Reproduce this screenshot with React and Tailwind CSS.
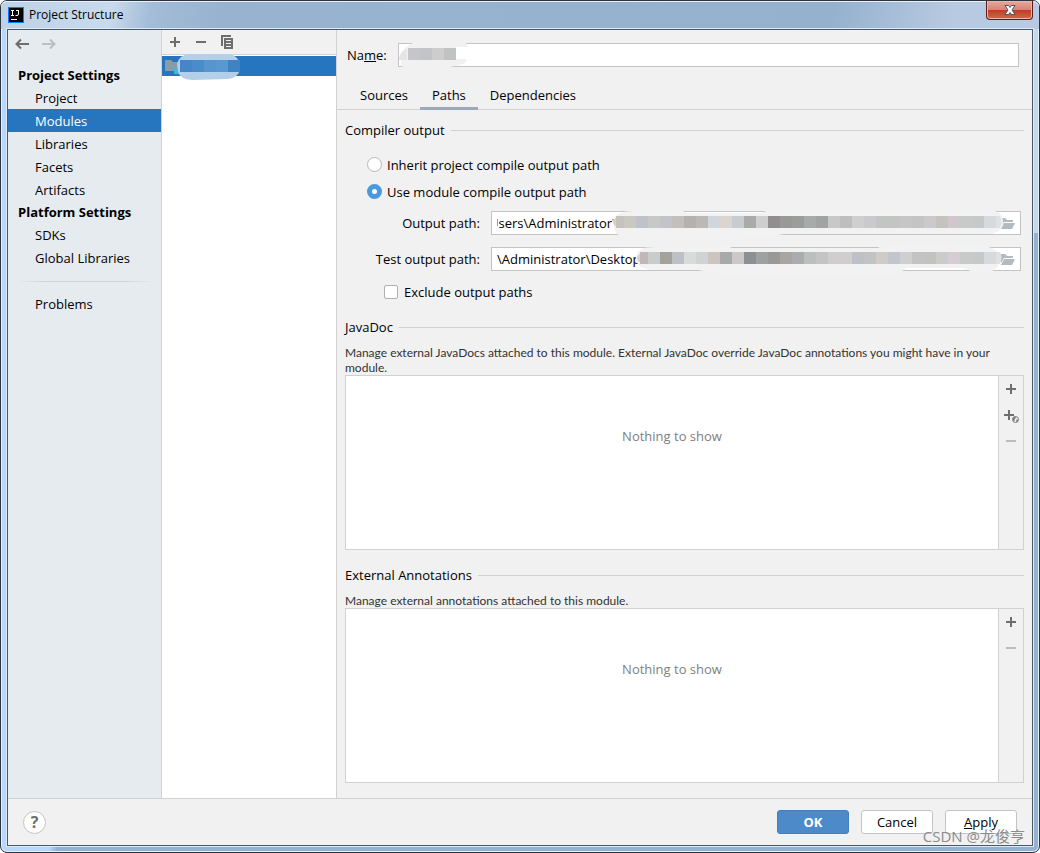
import { useState } from 'react'
import clsx from 'clsx'

const projectItems = ['Project', 'Modules', 'Libraries', 'Facets', 'Artifacts']
const platformItems = ['SDKs', 'Global Libraries']
const tabs = ['Sources', 'Paths', 'Dependencies']

const nameMask = ['#c5c6c9', '#c3c4c8', '#cfcccc', '#c1c2c4']
const moduleMask = ['#4586ca', '#4a8bcb', '#5894cf', '#5a98d2', '#4083c5']
const outputMask = [
  '#c5c2c0', '#cbc7c1', '#bfc3c9', '#c8c8ca', '#c3c4c9', '#c3bfbd', '#b5b1ae', '#bab9b7',
  '#d0d6dc', '#dad5d0', '#c8cccf', '#aaaaa8', '#cecece', '#918e8f', '#999999', '#9b9d9b',
  '#a9abaa', '#a1a4a2', '#c8c8c8', '#bebebe', '#cfcfcf', '#cacacc', '#c4c4c4', '#c3c5c3',
  '#c6c6c6', '#c4c4c4', '#cacacd', '#c4c3c0', '#cfc7cc', '#c8caca', '#c7c8c8', '#d7d9dd',
]
const testMask = [
  '#c2b6b9', '#c8cccb', '#a3a29d', '#bdc1c5', '#d9dbda', '#d0d3d1', '#cbc4bf', '#a7aaab',
  '#cdc8c8', '#8c9093', '#9fa1a0', '#999998', '#a9a6a1', '#aaacae', '#bcbfbd', '#c4c4c4',
  '#cecece', '#cfcdce', '#bfc0c6', '#c2c4c3', '#cfccc7', '#c2c5cc', '#cfcfcf', '#c3c3c3',
  '#c3c2c1', '#c9cccb', '#d6cdd2', '#c8caca', '#c7c8c8', '#d7d9dd',
]

const outputBand =
  'M132 4Q140 2 190 2L194 5H270L276 2H498Q511 3 511 14Q511 24 498 26H292Q270 31 200 31H134Q121 27 121 14Q121 7 132 4Z'
const testBand =
  'M152 4Q160 2 235 2L240 4H386L390 2H490Q508 4 508 14Q508 24 498 28H482L470 24H415L405 30H230L206 26H160Q144 24 144 14Q144 7 152 4Z'

function PlusIcon() {
  return (
    <svg width="16" height="16" viewBox="0 0 16 16" fill="#6e6e6e" aria-hidden="true">
      <path d="M7 3h2v4h4v2H9v4H7V9H3V7h4z" />
    </svg>
  )
}

function MinusIcon({ disabled }) {
  return (
    <svg width="16" height="16" viewBox="0 0 16 16" fill={disabled ? '#bdbdbd' : '#6e6e6e'} aria-hidden="true">
      <path d="M3 7h10v2H3z" />
    </svg>
  )
}

function CopyIcon() {
  return (
    <svg width="16" height="16" viewBox="0 0 16 16" fill="#6e6e6e" aria-hidden="true">
      <path d="M2 1h10v2H4v9H2z" />
      <path fillRule="evenodd" d="M5 4h9v11H5zM7 6v1h5V6zM7 9v1h5V9zM7 12v1h5v-1z" />
    </svg>
  )
}

function PlusGlobeIcon() {
  return (
    <svg className="overflow-visible" width="16" height="16" viewBox="0 0 16 16" aria-hidden="true">
      <path fill="#6e6e6e" d="M5 3h2v4h4v2H7v4H5V9H1V7h4z" />
      <circle cx="12.500" cy="12.500" r="3" fill="#f1f1f1" stroke="#7b7b7b" />
      <path fill="#7b7b7b" d="M10 10.500l2.500-1 .5 1.500-1.500 1 .5 1.500-1 .5-1.500-1.500zM13.500 12.500h2l-1 2-1.500.5z" />
    </svg>
  )
}

function ArrowIcon({ forward }) {
  return (
    <svg width="16" height="16" viewBox="0 0 16 16" fill="none" stroke={forward ? '#bcbfc1' : '#6e6e6e'} strokeWidth="2" aria-hidden="true">
      <path d={forward ? 'M1 8h12M9 3.500L13.500 8 9 12.500' : 'M15 8H3M7 3.500L2.500 8 7 12.500'} />
    </svg>
  )
}

function FolderOpenIcon() {
  return (
    <svg width="16" height="16" viewBox="0 0 16 16" fill="#b3bac0" aria-hidden="true">
      <path d="M1 3h4l2 2h6v2H4l-3 5z" />
      <path d="M4 8h11l-3 6H1z" />
    </svg>
  )
}

// Soft band with a row of 12px blocks that hides a path
function Mask({ start, colors, band }) {
  return (
    <svg
      className="pointer-events-none absolute -top-1 left-0 h-8 w-[530px]"
      viewBox="0 0 530 32"
      aria-hidden="true"
    >
      <path fill="#f2f2f2" d={band} />
      <path fill="#d3d1d0" d={`M${start + 12} 8Q${start + 2} 8 ${start + 1} 14Q${start + 2} 20 ${start + 12} 20z`} />
      {colors.map((color, i) => (
        <rect
          key={i}
          x={start + i * 12 + (i === 0 ? 4 : 0)}
          y="8"
          width={i === 0 ? 8 : 12}
          height="12"
          fill={color}
        />
      ))}
      <path fill="#dfe2e4" d="M504 8h4q3 6 0 12h-4z" />
    </svg>
  )
}

function PathField({ id, value, indent, start, colors, band }) {
  return (
    <div className="relative flex h-6 items-center border border-[#c4c4c4] bg-white pr-1 pl-[5px]">
      <input
        id={id}
        type="text"
        defaultValue={value}
        className={clsx('h-5 min-w-0 flex-1 bg-transparent outline-none', indent)}
      />
      <button type="button" aria-label="Browse">
        <FolderOpenIcon />
      </button>
      <Mask start={start} colors={colors} band={band} />
    </div>
  )
}

function SectionTitle({ children }) {
  return (
    <div className="flex h-5 items-center gap-[6px]">
      <h2>{children}</h2>
      <div className="h-px flex-1 bg-[#d1d1d1]" />
    </div>
  )
}

function EmptyList({ children }) {
  return (
    <div className="flex min-h-[175px] flex-1 border border-[#d1d1d1]">
      <div className="flex flex-1 justify-center bg-white pt-[49px] text-[#808080]">Nothing to show</div>
      <div className="flex w-[25px] flex-col items-center gap-[10px] border-l border-[#d1d1d1] pt-[5px]">
        {children}
      </div>
    </div>
  )
}

function NavGroup({ title, items, active, onSelect }) {
  return (
    <div>
      <h2 className="h-[22px] pl-[10px] font-bold">{title}</h2>
      {items.map((item) => (
        <button
          key={item}
          type="button"
          onClick={() => onSelect(item)}
          className={clsx(
            'block h-[23px] w-full pl-[27px] text-left',
            active === item && 'bg-[#2675bf] text-white'
          )}
        >
          {item}
        </button>
      ))}
    </div>
  )
}

export default function App() {
  const [section, setSection] = useState('Modules')
  const [tab, setTab] = useState('Paths')

  return (
    <div className="flex min-h-screen flex-col rounded-[7px] border border-[#2b3440] bg-[#94b1d0] bg-[linear-gradient(180deg,#c6d8ec_232px,transparent_232px),linear-gradient(90deg,#b9d6fb_48px,#94b1d0_56px)] bg-[length:6px_100%,100%_100%] bg-[position:100%_0,0_0] bg-no-repeat font-['Open_Sans','Noto_Sans_CJK_SC',sans-serif] text-[13px] leading-[22px] text-black shadow-[inset_0_0_0_1px_#e6f1fc]">
      {/* Title bar */}
      <header className="flex h-7 items-start rounded-t-[6px] bg-[linear-gradient(100deg,#bed1e6,#c8daed_110px,#a3bcd7_150px,#97b3d0_220px,#94b1ce_820px,#b8cae1_940px,#b8cae1)] pr-[6px] pl-[7px] shadow-[inset_0_1px_0_#e6f1fc]">
        <svg className="mt-[6px]" width="16" height="16" viewBox="0 0 16 16" fill="none" aria-hidden="true">
          <path fill="#087cfa" d="M0 0h16v16H0z" />
          <path fill="#000" d="M1 1h14v14H1z" />
          <path stroke="#fff" d="M3 3.500h3M4.500 3.500v5M3 8.500h3M8 3.500h3M10.500 3v4q0 1.500-1.500 1.500H7.500M3 12.500h6" />
        </svg>
        <h1 className="mt-[3px] ml-[5px] flex-1 text-xs leading-[22px]">Project Structure</h1>
        <button
          type="button"
          aria-label="Close"
          className="flex h-[19px] w-[47px] items-center justify-center rounded-b-[4px] border border-t-0 border-[#5a1f22] bg-[linear-gradient(#e8a99d,#d98374_48%,#c03a22_50%,#cf6a50)] shadow-[inset_0_0_0_1px_#ecb5aa]"
        >
          <svg width="12" height="10" viewBox="0 0 12 10" aria-hidden="true">
            <path
              fill="#fff"
              stroke="#4d5566"
              d="M1 .5h3.500L6 2.500 7.500.5H11L8 5l3 4.500H7.500L6 7.500 4.500 9.500H1L4 5z"
            />
          </svg>
        </button>
      </header>

      <div className="mx-[6px] mb-[6px] flex flex-1 flex-col border border-[#4b5965] bg-[#f1f1f1] shadow-[0_0_0_1px_#dbe9f8]">
        <div className="flex flex-1">
          {/* Settings navigation */}
          <nav className="w-[154px] shrink-0 border-r border-[#d1d1d1] bg-[#e6ebef]">
            <div className="flex h-[34px] gap-[11px] pt-[6px] pl-[6px]">
              <button type="button" aria-label="Back" className="h-4">
                <ArrowIcon />
              </button>
              <button type="button" aria-label="Forward" className="h-4" disabled>
                <ArrowIcon forward />
              </button>
            </div>
            <NavGroup title="Project Settings" items={projectItems} active={section} onSelect={setSection} />
            <NavGroup title="Platform Settings" items={platformItems} active={section} onSelect={setSection} />
            <div className="mx-2 mt-3 mb-[10px] h-px bg-[linear-gradient(90deg,transparent,#cfd3d6_20%,#cfd3d6_80%,transparent)]" />
            <button type="button" className="block h-[23px] w-full pl-[27px] text-left">
              Problems
            </button>
          </nav>

          {/* Module list */}
          <section className="flex w-[175px] shrink-0 flex-col border-r border-[#d1d1d1]">
            <div className="flex h-[25px] items-center gap-[10px] border-b border-[#d1d1d1] pl-[5px]">
              <button type="button" aria-label="Add">
                <PlusIcon />
              </button>
              <button type="button" aria-label="Remove">
                <MinusIcon />
              </button>
              <button type="button" aria-label="Copy">
                <CopyIcon />
              </button>
            </div>
            <div className="flex-1 bg-white pt-px">
              <button type="button" aria-label="Module" className="relative block h-5 w-full bg-[#2675bf]">
                <svg className="absolute -top-[2px] left-0" width="84" height="28" viewBox="0 0 84 28" aria-hidden="true">
                  <path fill="#8a9ba8" d="M3 6h6l2 2h6v9H3z" />
                  <path fill="#40b6e0" d="M12 14h6v6h-6z" />
                  <path fill="#b3cfea" d="M27 0h40q11 2 11 13 0 10-12 12l-36 1q-12-1-14-8l-1-8q2-9 12-10z" />
                  {moduleMask.map((color, i) => (
                    <rect key={i} x={18 + i * 12} y="6" width="12" height="12" fill={color} />
                  ))}
                </svg>
              </button>
            </div>
          </section>

          {/* Module editor */}
          <main className="flex min-w-0 flex-1 flex-col">
            <div className="flex items-center gap-3 pt-[13px] pr-[13px] pl-[10px]">
              <label htmlFor="module-name" className="w-[39px] shrink-0 whitespace-nowrap">
                Na<span className="underline">m</span>e:
              </label>
              <div className="relative h-6 flex-1">
                <input
                  id="module-name"
                  type="text"
                  className="block h-6 w-full border border-[#c4c4c4] bg-white px-[5px] outline-none"
                />
                <svg className="pointer-events-none absolute -top-px left-0" width="72" height="30" viewBox="0 0 72 30" aria-hidden="true">
                  <path fill="#f1f1f1" d="M18 0h50l2 5H58v12h11q-2 6-12 7l-10 2-34 2-10-4V14Q6 3 18 0z" />
                  <path fill="#e6e5e4" d="M9 6v12H1Q1 10 9 6z" />
                  {nameMask.map((color, i) => (
                    <rect key={i} x={10 + i * 12} y="6" width="12" height="12" fill={color} />
                  ))}
                </svg>
              </div>
            </div>

            <div className="mt-[15px] flex h-7 border-b border-[#d1d1d1] pl-[11px]" role="tablist">
              {tabs.map((name) => (
                <button
                  key={name}
                  type="button"
                  role="tab"
                  aria-selected={tab === name}
                  onClick={() => setTab(name)}
                  className={clsx(
                    '-mb-px h-7 border-b-[3px] px-3',
                    tab === name ? 'border-[#9ca9b9]' : 'border-transparent'
                  )}
                >
                  {name}
                </button>
              ))}
            </div>

            <div className="flex flex-1 flex-col pt-[10px] pr-2 pb-[15px] pl-2">
              <SectionTitle>Compiler output</SectionTitle>
              <div className="mt-[11px] flex flex-col pl-[22px]">
                <label className="flex h-[27px] items-center gap-[5px]">
                  <input
                    type="radio"
                    name="output"
                    className="size-[15px] appearance-none rounded-full border border-[#b8b8b8] bg-white checked:border-[5px] checked:border-[#4a98df]"
                  />
                  Inherit project compile output path
                </label>
                <label className="flex h-[27px] items-center gap-[5px]">
                  <input
                    type="radio"
                    name="output"
                    defaultChecked
                    className="size-[15px] appearance-none rounded-full border border-[#b8b8b8] bg-white checked:border-[5px] checked:border-[#4a98df]"
                  />
                  Use module compile output path
                </label>
              </div>
              <div className="mt-[6px] grid grid-cols-[135px_1fr] items-center gap-x-[11px] gap-y-3 pr-[3px]">
                <label htmlFor="output-path" className="text-right">
                  Output path:
                </label>
                <PathField
                  id="output-path"
                  value="Users\Administrator\"
                  indent="-indent-[8px]"
                  start={120}
                  colors={outputMask}
                  band={outputBand}
                />
                <label htmlFor="test-output-path" className="text-right">
                  Test output path:
                </label>
                <PathField
                  id="test-output-path"
                  value="\Administrator\Desktop"
                  start={144}
                  colors={testMask}
                  band={testBand}
                />
              </div>
              <label className="mt-[10px] flex h-[22px] items-center gap-[6px] pl-[39px]">
                <input
                  type="checkbox"
                  className="size-[14px] appearance-none rounded-[2px] border border-[#b0b0b0] bg-white"
                />
                Exclude output paths
              </label>

              <div className="mt-[14px] flex flex-1 flex-col">
                <SectionTitle>JavaDoc</SectionTitle>
                <p className="mt-2 font-['Lato',sans-serif] text-xs leading-[15px] text-[#333]">
                  Manage external JavaDocs attached to this module. External JavaDoc override JavaDoc annotations you might have in your module.
                </p>
                <EmptyList>
                  <button type="button" aria-label="Add JavaDoc">
                    <PlusIcon />
                  </button>
                  <button type="button" aria-label="Add JavaDoc URL">
                    <PlusGlobeIcon />
                  </button>
                  <button type="button" aria-label="Remove JavaDoc" disabled>
                    <MinusIcon disabled />
                  </button>
                </EmptyList>
              </div>

              <div className="mt-[15px] flex flex-1 flex-col">
                <SectionTitle>External Annotations</SectionTitle>
                <p className="mt-2 font-['Lato',sans-serif] text-xs leading-[15px] text-[#333]">
                  Manage external annotations attached to this module.
                </p>
                <EmptyList>
                  <button type="button" aria-label="Add annotations">
                    <PlusIcon />
                  </button>
                  <button type="button" aria-label="Remove annotations" disabled>
                    <MinusIcon disabled />
                  </button>
                </EmptyList>
              </div>
            </div>
          </main>
        </div>

        {/* Dialog buttons */}
        <footer className="relative flex h-[47px] items-center gap-3 border-t border-[#d1d1d1] pr-[15px] pl-[15px]">
          <button
            type="button"
            aria-label="Help"
            className="mr-auto flex size-[23px] items-center justify-center rounded-full border border-[#c4c4c4] bg-white text-base font-bold text-[#6e6e6e]"
          >
            ?
          </button>
          <button type="button" className="h-6 w-[72px] rounded-[3px] border border-[#437fbd] bg-[#4c8ac9] font-bold text-white">
            OK
          </button>
          <button type="button" className="h-6 w-[72px] rounded-[3px] border border-[#c4c4c4] bg-white">
            Cancel
          </button>
          <button type="button" className="h-6 w-[72px] rounded-[3px] border border-[#c4c4c4] bg-white">
            <span className="underline">A</span>pply
          </button>
          <span className="pointer-events-none absolute right-[7px] bottom-px text-[15px] leading-4 text-[#8c8c8c]">
            CSDN @龙俊亨
          </span>
        </footer>
      </div>
    </div>
  )
}
